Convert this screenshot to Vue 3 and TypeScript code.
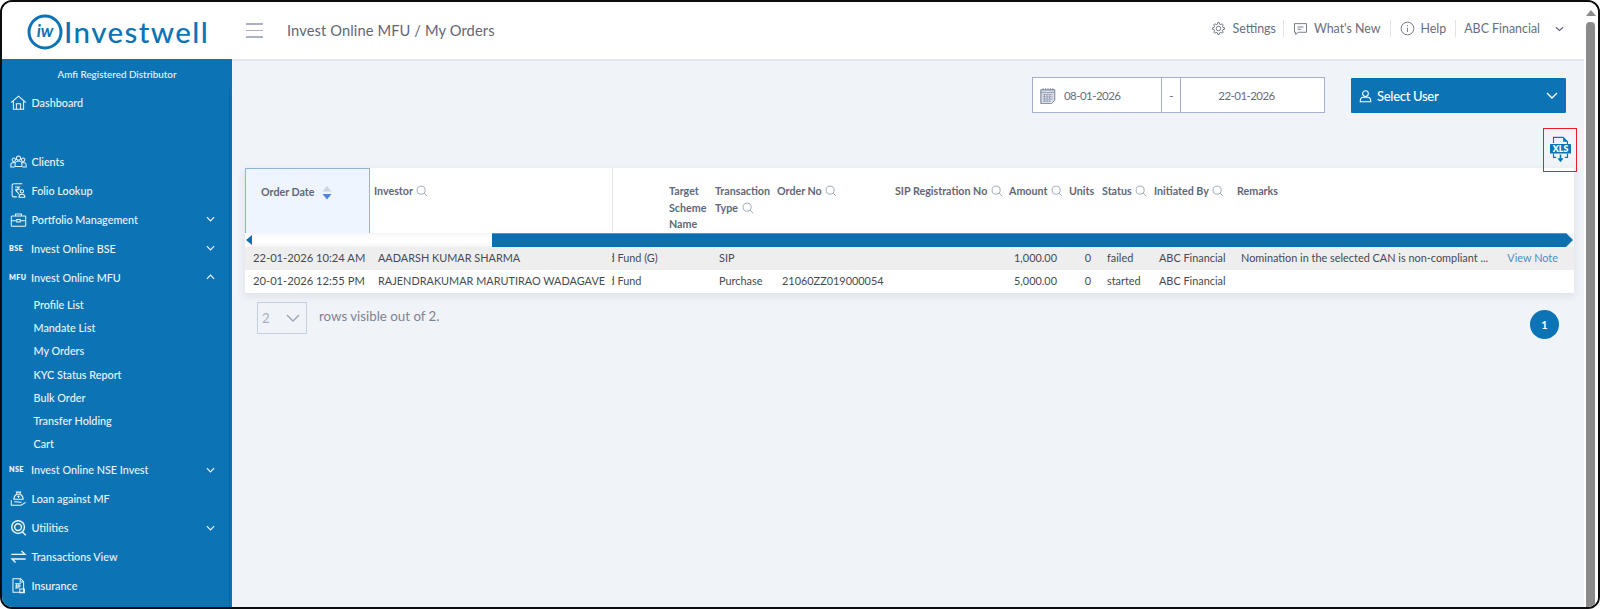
<script setup lang="ts">
interface NavItem { label: string; icon?: string; tag?: string; chevron?: 'up' | 'down'; gap?: boolean; sub?: boolean; first?: boolean }

const icons: Record<string, string[]> = {
  home: ['M1.5 10 10 2.5 18.5 10', 'M4 8.5V18h12V8.5', 'M7.5 18v-6.5h5V18'],
  clients: ['M7.5 6a2.5 2.5 0 1 0 5 0 2.5 2.5 0 1 0-5 0', 'M2.5 8a2 2 0 1 0 4 0 2 2 0 1 0-4 0', 'M13.5 8a2 2 0 1 0 4 0 2 2 0 1 0-4 0', 'M6 16v-3c0-2 2-3.5 4-3.5s4 1.500 4 3.500v3z', 'M6 11.500H3c-1.200 0-2 1-2 2.500v2.500h4.500', 'M14 11.500h3c1.200 0 2 1 2 2.500v2.500h-4.500'],
  folio: ['M5 2h9.500M2.500 4v12c0 1 .5 1.500 1.500 1.500h4', 'M2.500 4c0-1 .5-2 2.500-2', 'M6 6h6M6 8.500h6M8 6c2.500 0 2.500 4-1 4l4 4.500', 'M12 11a2 2 0 1 0 4 0 2 2 0 1 0-4 0', 'M10.500 18c0-2.500 1.500-3.500 3.500-3.500s3.500 1 3.500 3.500z'],
  case: ['M1.500 7a1 1 0 0 1 1-1h15a1 1 0 0 1 1 1v10a1 1 0 0 1-1 1h-15a1 1 0 0 1-1-1z', 'M6.500 6V3.500h7V6', 'M1.500 11.500H8M12 11.500h6.500', 'M8 10h4v3H8z'],
  loan: ['M7.500 2.500h5l-1 2.500h-3z', 'M8 5c-2.500 1.500-3.500 4-3.500 6h11c0-2-1-4.500-3.500-6', 'M10 6.500v3M8.700 7.500h2.600', 'M1.500 12v6h4M5 14c3-.5 5 .5 7 .5h1.500M5.500 18h7.500l5.500-3.500'],
  util: ['M2 9.500a7.500 7.500 0 1 0 15 0 7.500 7.500 0 1 0-15 0', 'M5.500 9.500a4 4 0 1 0 8 0 4 4 0 1 0-8 0', 'M14.500 15 18.500 19'],
  swap: ['M1.500 7.500h16L13.500 3.500', 'M18.500 13H2.500l4 4'],
  ins: ['M3.500 2h9l3.500 3.500V18h-12.500z', 'M12 2v4h4', 'M6 8h7M6 10.500h7M6 13h4', 'M8 8v5M10.500 8v5', 'M11.500 14h5.500v4.500h-5.500z'],
};

const nav: NavItem[] = [
  { label: 'Dashboard', icon: 'home', gap: true },
  { label: 'Clients', icon: 'clients' },
  { label: 'Folio Lookup', icon: 'folio' },
  { label: 'Portfolio Management', icon: 'case', chevron: 'down' },
  { label: 'Invest Online BSE', tag: 'BSE', chevron: 'down' },
  { label: 'Invest Online MFU', tag: 'MFU', chevron: 'up' },
  { label: 'Profile List', sub: true, first: true },
  { label: 'Mandate List', sub: true },
  { label: 'My Orders', sub: true },
  { label: 'KYC Status Report', sub: true },
  { label: 'Bulk Order', sub: true },
  { label: 'Transfer Holding', sub: true },
  { label: 'Cart', sub: true },
  { label: 'Invest Online NSE Invest', tag: 'NSE', chevron: 'down' },
  { label: 'Loan against MF', icon: 'loan' },
  { label: 'Utilities', icon: 'util', chevron: 'down' },
  { label: 'Transactions View', icon: 'swap' },
  { label: 'Insurance', icon: 'ins' },
];

const gear = (() => {
  const pts: string[] = [];
  const teeth = 8;
  for (let i = 0; i < teeth; i++) {
    const a = (i / teeth) * Math.PI * 2;
    const w = Math.PI / teeth;
    const seq: [number, number][] = [[6, a - w * 0.62], [8, a - w * 0.32], [8, a + w * 0.32], [6, a + w * 0.62]];
    for (const [r, t] of seq) pts.push(`${(10 + r * Math.cos(t)).toFixed(2)} ${(10 + r * Math.sin(t)).toFixed(2)}`);
  }
  return `M${pts.join('L')}Z`;
})();

const headers = [
  { label: 'Investor', search: true },
  { label: '' },
  { label: 'Target Scheme Name' },
  { label: 'Transaction Type', search: true },
  { label: 'Order No', search: true },
  { label: 'SIP Registration No', search: true },
  { label: 'Amount', search: true },
  { label: 'Units' },
  { label: 'Status', search: true },
  { label: 'Initiated By', search: true },
  { label: 'Remarks' },
];

const rows = [
  { date: '22-01-2026 10:24 AM', investor: 'AADARSH KUMAR SHARMA', fund: 'd Fund (G)', type: 'SIP', order: '', amount: '1,000.00', units: '0', status: 'failed', by: 'ABC Financial', remarks: 'Nomination in the selected CAN is non-compliant ...', note: 'View Note' },
  { date: '20-01-2026 12:55 PM', investor: 'RAJENDRAKUMAR MARUTIRAO WADAGAVE', fund: 'd Fund', type: 'Purchase', order: '21060ZZ019000054', amount: '5,000.00', units: '0', status: 'started', by: 'ABC Financial', remarks: '', note: '' },
];
</script>

<template>
  <div class="frame">
    <div class="content">
      <header class="topbar">
        <div class="logo">
          <svg class="logo-mark" viewBox="0 0 36 36">
            <circle cx="18" cy="18" r="16" fill="none" stroke="#0c74b4" stroke-width="3" />
            <text x="18" y="23" text-anchor="middle" class="logo-iw">iw</text>
          </svg>
          <span class="logo-text">Investwell</span>
        </div>
        <div class="burger"><i></i><i></i><i></i></div>
        <div class="crumb">Invest Online MFU / My Orders</div>
        <nav class="top-links">
          <a class="top-link">
            <svg class="top-ic" viewBox="0 0 20 20"><path :d="gear" /><circle cx="10" cy="10" r="3" /></svg>
            Settings
          </a>
          <a class="top-link">
            <svg class="top-ic" viewBox="0 0 20 20"><path d="M2 3.500h16v11.500H7l-3.500 3v-3H2z" /><path d="M6 8h8M6 11h5" /></svg>
            What's New
          </a>
          <a class="top-link">
            <svg class="top-ic" viewBox="0 0 20 20"><circle cx="10" cy="10" r="8.500" /><path d="M10 9v5.500M10 5.500v1.500" /></svg>
            Help
          </a>
          <a class="top-link last">
            ABC Financial
            <svg class="top-chev" viewBox="0 0 10 6"><path d="M1 1l4 3.500L9 1" /></svg>
          </a>
        </nav>
      </header>

      <div class="body">
        <aside class="sidebar">
          <span class="side-edge"></span>
          <div class="amfi">Amfi Registered Distributor</div>
          <div
            v-for="item in nav"
            :key="item.label"
            class="nav-item"
            :class="{ 'is-sub': item.sub, 'has-gap': item.gap, 'is-first': item.first }"
          >
            <svg v-if="item.icon" class="nav-ic" :class="{ heavy: item.icon === 'util' || item.icon === 'swap' }" viewBox="0 0 20 20">
              <path v-for="d in icons[item.icon]" :key="d" :d="d" />
            </svg>
            <span v-else-if="item.tag" class="nav-tag">{{ item.tag }}</span>
            <span class="nav-label">{{ item.label }}</span>
            <svg v-if="item.chevron" class="nav-chev" :class="{ up: item.chevron === 'up' }" viewBox="0 0 10 6">
              <path d="M1 1l4 4 4-4" />
            </svg>
          </div>
        </aside>

        <main class="main">
          <div class="toolbar">
            <div class="daterange">
              <div class="date-from">
                <svg class="cal" viewBox="0 0 18 20">
                  <path d="M1 3.500h15.500v12L13 19H1z" fill="#dfe4ee" />
                  <path d="M1 3.500h15.500v12L13 19H1zM1 6.500h15.500" />
                  <path d="M3.500 1.500v3M6.300 1.500v3M9 1.500v3M11.700 1.500v3M14.400 1.500v3" />
                  <path d="M3 9h11.500M3 11.500h11.500M3 14h11.500M3 16.500h9M5 8v9M8 8v9M11 8v9" stroke-width=".8" />
                </svg>
                <span>08-01-2026</span>
              </div>
              <div class="date-sep">-</div>
              <div class="date-to">22-01-2026</div>
            </div>
            <button class="select-user" type="button">
              <svg class="user-ic" viewBox="0 0 16 16"><circle cx="8" cy="5" r="3.500" /><path d="M1.500 15c0-4 2-5.500 3.500-5.500h6c1.500 0 3.500 1.500 3.500 5.500z" /></svg>
              <span>Select User</span>
              <svg class="user-chev" viewBox="0 0 12 7"><path d="M1 1l5 5 5-5" /></svg>
            </button>
          </div>

          <div class="download-row">
            <div class="xls">
              <svg viewBox="0 0 24 32" class="xls-ic">
                <path d="M4 8V1.500h11L20 6.500V9" fill="none" stroke="#0c74b4" stroke-width="1.300" />
                <path d="M15 1.500V6.500h5z" fill="#0c74b4" />
                <rect x="0" y="9" width="24" height="11" rx="1" fill="#0c74b4" />
                <text x="12" y="18.300" text-anchor="middle" class="xls-text">XLS</text>
                <path d="M4 20v4.500h3M20 20v4.500h-3" fill="none" stroke="#0c74b4" stroke-width="1.300" />
                <path d="M12 21v6" stroke="#0c74b4" stroke-width="1.800" />
                <path d="M8.500 25.500h7L12 30z" fill="#0c74b4" />
              </svg>
            </div>
          </div>

          <section class="grid">
            <div class="cols head">
              <div class="th th-date">
                <span>Order Date</span>
                <svg class="sort" viewBox="0 0 10 14"><path d="M5 0l4.500 5.500h-9z" fill="#cdd3de" /><path d="M.5 8h9L5 13.500z" fill="#4d86e0" /></svg>
              </div>
              <div v-for="(h, i) in headers" :key="i" class="th" :class="{ 'th-divider': i === 1 }">
                {{ h.label }}
                <svg v-if="h.search" class="search" viewBox="0 0 14 14"><circle cx="6" cy="6" r="4.700" /><path d="M9.500 9.500 13 13" /></svg>
              </div>
            </div>

            <div class="hscroll">
              <span class="arrow-left"></span>
              <div class="track"></div>
              <div class="thumb"></div>
              <span class="arrow-right"></span>
            </div>

            <div v-for="(r, i) in rows" :key="r.date" class="cols row" :class="{ alt: i === 0 }">
              <div class="td td-date">{{ r.date }}</div>
              <div class="td td-inv">{{ r.investor }}</div>
              <div class="td td-fund"><span>{{ r.fund }}</span></div>
              <div class="td td-type">{{ r.type }}</div>
              <div class="td td-order">{{ r.order }}</div>
              <div class="td td-amt">{{ r.amount }}</div>
              <div class="td td-units">{{ r.units }}</div>
              <div class="td td-status">{{ r.status }}</div>
              <div class="td td-by">{{ r.by }}</div>
              <div class="td td-rem">
                <span>{{ r.remarks }}</span>
                <a class="note">{{ r.note }}</a>
              </div>
            </div>
          </section>

          <div class="pager">
            <div class="page-size">
              <span>2</span>
              <svg viewBox="0 0 14 8"><path d="M1 1l6 6 6-6" /></svg>
            </div>
            <span class="page-text">rows visible out of 2.</span>
            <span class="page-num">1</span>
          </div>
        </main>
      </div>
    </div>

    <div class="vscroll">
      <span class="vs-up"></span>
      <div class="vs-thumb"></div>
    </div>
  </div>
</template>

<style>
html, body { margin: 0; background: #fff; }
</style>

<style scoped>
.frame {
  box-sizing: border-box;
  width: 1600px;
  height: 609px;
  border: 2px solid #0c0c0c;
  border-radius: 12px;
  overflow: hidden;
  display: flex;
  background: #fff;
  font-family: Lato, "Liberation Sans", sans-serif;
}
.content { width: 1582px; display: flex; flex-direction: column; }

.topbar { height: 57px; display: flex; align-items: center; background: #fff; flex: none; }
.logo { width: 244px; padding: 2px 0 0 25px; box-sizing: border-box; display: flex; align-items: center; color: #0c74b4; }
.logo-mark { width: 36px; height: 36px; flex: none; }
.logo-iw { font: italic 700 17px Lato, sans-serif; fill: #0c74b4; }
.logo-text { font-size: 29.500px; font-weight: 500; letter-spacing: 1.400px; margin-left: 1px; line-height: 36px; }
.burger { width: 17px; display: flex; flex-direction: column; gap: 5px; }
.burger i { display: block; height: 1.500px; background: #a9b2c4; }
.crumb { margin: -2px 0 0 24px; font-size: 14.700px; color: #5f6779; letter-spacing: .1px; }
.top-links { margin: -4px 0 0 auto; display: flex; align-items: center; font-size: 12.400px; color: #666e80; }
.top-link { display: flex; align-items: center; gap: 6px; padding: 0 9px; border-right: 1px solid #e0e3ea; height: 17px; }
.top-link:first-child { padding-right: 7px; }
.top-link.last { border-right: 0; padding: 0 20px 0 8px; gap: 15px; }
.top-ic { width: 15px; height: 15px; fill: none; stroke: #666e80; stroke-width: 1.200; }
.top-chev { width: 9px; height: 6px; fill: none; stroke: #5f6779; stroke-width: 1.300; }

.body { flex: 1; display: flex; min-height: 0; }

.sidebar {
  position: relative;
  width: 230px;
  flex: none;
  box-sizing: border-box;
  background: #0c74b4;
  color: #eef5fa;
  font-size: 10.800px;
  font-weight: 500;
  overflow: hidden;
}
.side-edge { position: absolute; right: 2px; top: 30px; bottom: 0; width: 1.500px; background: #0a64a0; }
.amfi { height: 29px; box-sizing: border-box; display: flex; align-items: center; justify-content: center; font-size: 9.900px; }
.nav-item { height: 29px; display: flex; align-items: center; padding-left: 7px; }
.nav-item.has-gap { margin-bottom: 29.500px; }
.nav-item.is-sub { height: 23.200px; padding-left: 31.500px; }
.nav-item.is-first { margin-top: 1.500px; }
.nav-ic { width: 17px; height: 17px; flex: none; fill: none; stroke: #eef5fa; stroke-width: 1.200; margin: 0 4.500px 0 1px; }
.nav-ic.heavy { stroke-width: 1.700; }
.nav-tag { width: 22px; flex: none; font-size: 7.200px; font-weight: 800; letter-spacing: .4px; }
.nav-chev { width: 9px; height: 6px; margin-left: auto; margin-right: 17px; fill: none; stroke: #eef5fa; stroke-width: 1.300; }
.nav-chev.up { transform: rotate(180deg); }

.main { flex: 1; background: #f0f3f8; border-top: 2px solid #e1e6ef; min-width: 0; }

.toolbar { display: flex; justify-content: flex-end; gap: 26px; padding: 16px 18px 0 0; height: 36px; }
.daterange { box-sizing: border-box; width: 293px; height: 36px; border: 1px solid #a5b1cc; background: #fff; display: flex; font-size: 11.500px; letter-spacing: -.55px; color: #666e80; }
.date-from { width: 128px; display: flex; align-items: center; gap: 8px; padding-left: 7px; box-sizing: border-box; }
.cal { width: 16px; height: 19px; fill: none; stroke: #8a93a8; stroke-width: 1; }
.date-sep { width: 20px; box-sizing: border-box; border-left: 1px solid #a5b1cc; border-right: 1px solid #a5b1cc; display: flex; align-items: center; justify-content: center; }
.date-to { flex: 1; display: flex; align-items: center; justify-content: center; padding-right: 12px; }
.select-user {
  width: 215px; height: 35px; margin-top: 1px; border: 0; background: #0c74b4; color: #fff; display: flex; align-items: center;
  padding: 0 8px; font: 500 13px Lato, sans-serif; letter-spacing: -.3px; border-radius: 1px;
}
.user-ic { width: 13px; height: 14px; fill: none; stroke: #fff; stroke-width: 1.300; margin-right: 5px; }
.user-chev { width: 12px; height: 7px; margin-left: auto; fill: none; stroke: #fff; stroke-width: 1.400; }

.download-row { height: 55px; display: flex; justify-content: flex-end; padding-right: 7px; position: relative; z-index: 2; }
.xls { box-sizing: border-box; width: 34px; height: 44px; margin-top: 15px; border: 1.500px solid #e3202a; display: flex; align-items: center; justify-content: center; }
.xls-ic { width: 21px; height: 28px; }
.xls-text { font: 800 10px Lato, sans-serif; fill: #fff; }

.grid { margin-left: 13px; width: 1329px; box-shadow: 0 3px 8px rgba(70, 90, 120, .12); }
.cols { display: grid; grid-template-columns: 125px 242px 53px 46px 62px 118px 114px 60px 33px 52px 83px 341px; }
.head { height: 65px; background: #fff; font-size: 10.700px; font-weight: 700; color: #5f6779; line-height: 16.500px; }
.th { padding: 15px 0 0 4px; box-sizing: border-box; min-width: 0; white-space: normal; }
.th-date { background: #eef5fe; border: 1px solid #8fb4de; border-bottom: 0; padding: 15px 0 0 15px; display: flex; align-items: flex-start; gap: 7px; }
.th-divider { border-left: 1px solid #e2e4e8; margin-bottom: 1px; }
.search { width: 12px; height: 12px; fill: none; stroke: #9aa4b6; stroke-width: 1.100; vertical-align: -2px; margin-left: 1px; }
.sort { width: 10px; height: 14px; margin-top: 2px; }

.hscroll { height: 14px; position: relative; background: #fff; display: flex; }
.track { width: 242px; margin-left: 5px; background: linear-gradient(#f6f6f6, #fff 35%, #fff 70%, #f4f4f4); flex: none; }
.thumb { flex: 1; background: #0c70ae; border-top: 1px solid #5b92c4; margin-right: 8px; }
.arrow-left, .arrow-right { position: absolute; top: 2px; width: 0; height: 0; border-top: 5px solid transparent; border-bottom: 5px solid transparent; }
.arrow-left { left: 1px; border-right: 6px solid #0c70ae; }
.arrow-right { right: 1px; top: 0; border-top-width: 7px; border-bottom-width: 7px; border-left: 7px solid #0c70ae; background: #f0f3f8; border-top-color: #f0f3f8; border-bottom-color: #f0f3f8; }

.row { height: 23px; background: #fff; font-size: 10.900px; color: #454a55; line-height: 22px; white-space: nowrap; }
.row.alt { background: #eeeeee; }
.td { min-width: 0; }
.td-date { grid-column: 1; padding-left: 8px; font-size: 11.200px; }
.td-inv { grid-column: 2; padding-left: 8px; }
.td-fund { grid-column: 3 / 5; overflow: hidden; }
.td-fund span { margin-left: -3.500px; display: inline-block; }
.td-type { grid-column: 5; padding-left: 8px; }
.td-order { grid-column: 6; padding-left: 9px; }
.td-amt { grid-column: 7 / 9; text-align: right; padding-right: 8px; }
.td-units { grid-column: 9; text-align: right; padding-right: 7px; }
.td-status { grid-column: 10; padding-left: 9px; }
.td-by { grid-column: 11; padding-left: 9px; }
.td-rem { grid-column: 12; padding: 0 16px 0 8px; display: flex; justify-content: space-between; }
.note { color: #4f8fc0; }

.pager { display: flex; align-items: center; margin: 9px 0 0 25px; width: 1302px; height: 32px; color: #7c8497; font-size: 13.300px; }
.page-size { box-sizing: border-box; width: 50px; height: 32px; border: 1px solid #c4cfe0; display: flex; align-items: center; justify-content: space-between; padding: 0 6px 0 4px; color: #a7aebd; }
.page-size svg { width: 14px; height: 8px; fill: none; stroke: #9aa3b5; stroke-width: 1.300; }
.page-text { margin: -4px 0 0 12px; }
.page-num { margin-left: auto; width: 29px; height: 29px; margin-top: 12px; border-radius: 50%; background: #0c74b4; color: #fff; font-size: 11px; font-weight: 700; display: flex; align-items: center; justify-content: center; }

.vscroll { flex: 1; position: relative; background: #fff; display: flex; flex-direction: column; align-items: flex-start; padding-left: 2px; }
.vs-up { margin-top: 8px; width: 0; height: 0; border-left: 5px solid transparent; border-right: 5px solid transparent; border-bottom: 6px solid #8a8a8a; }
.vs-thumb { margin-top: 6px; flex: 1; width: 9px; background: #8a8a8a; border-radius: 4px 4px 0 0; }
</style>
